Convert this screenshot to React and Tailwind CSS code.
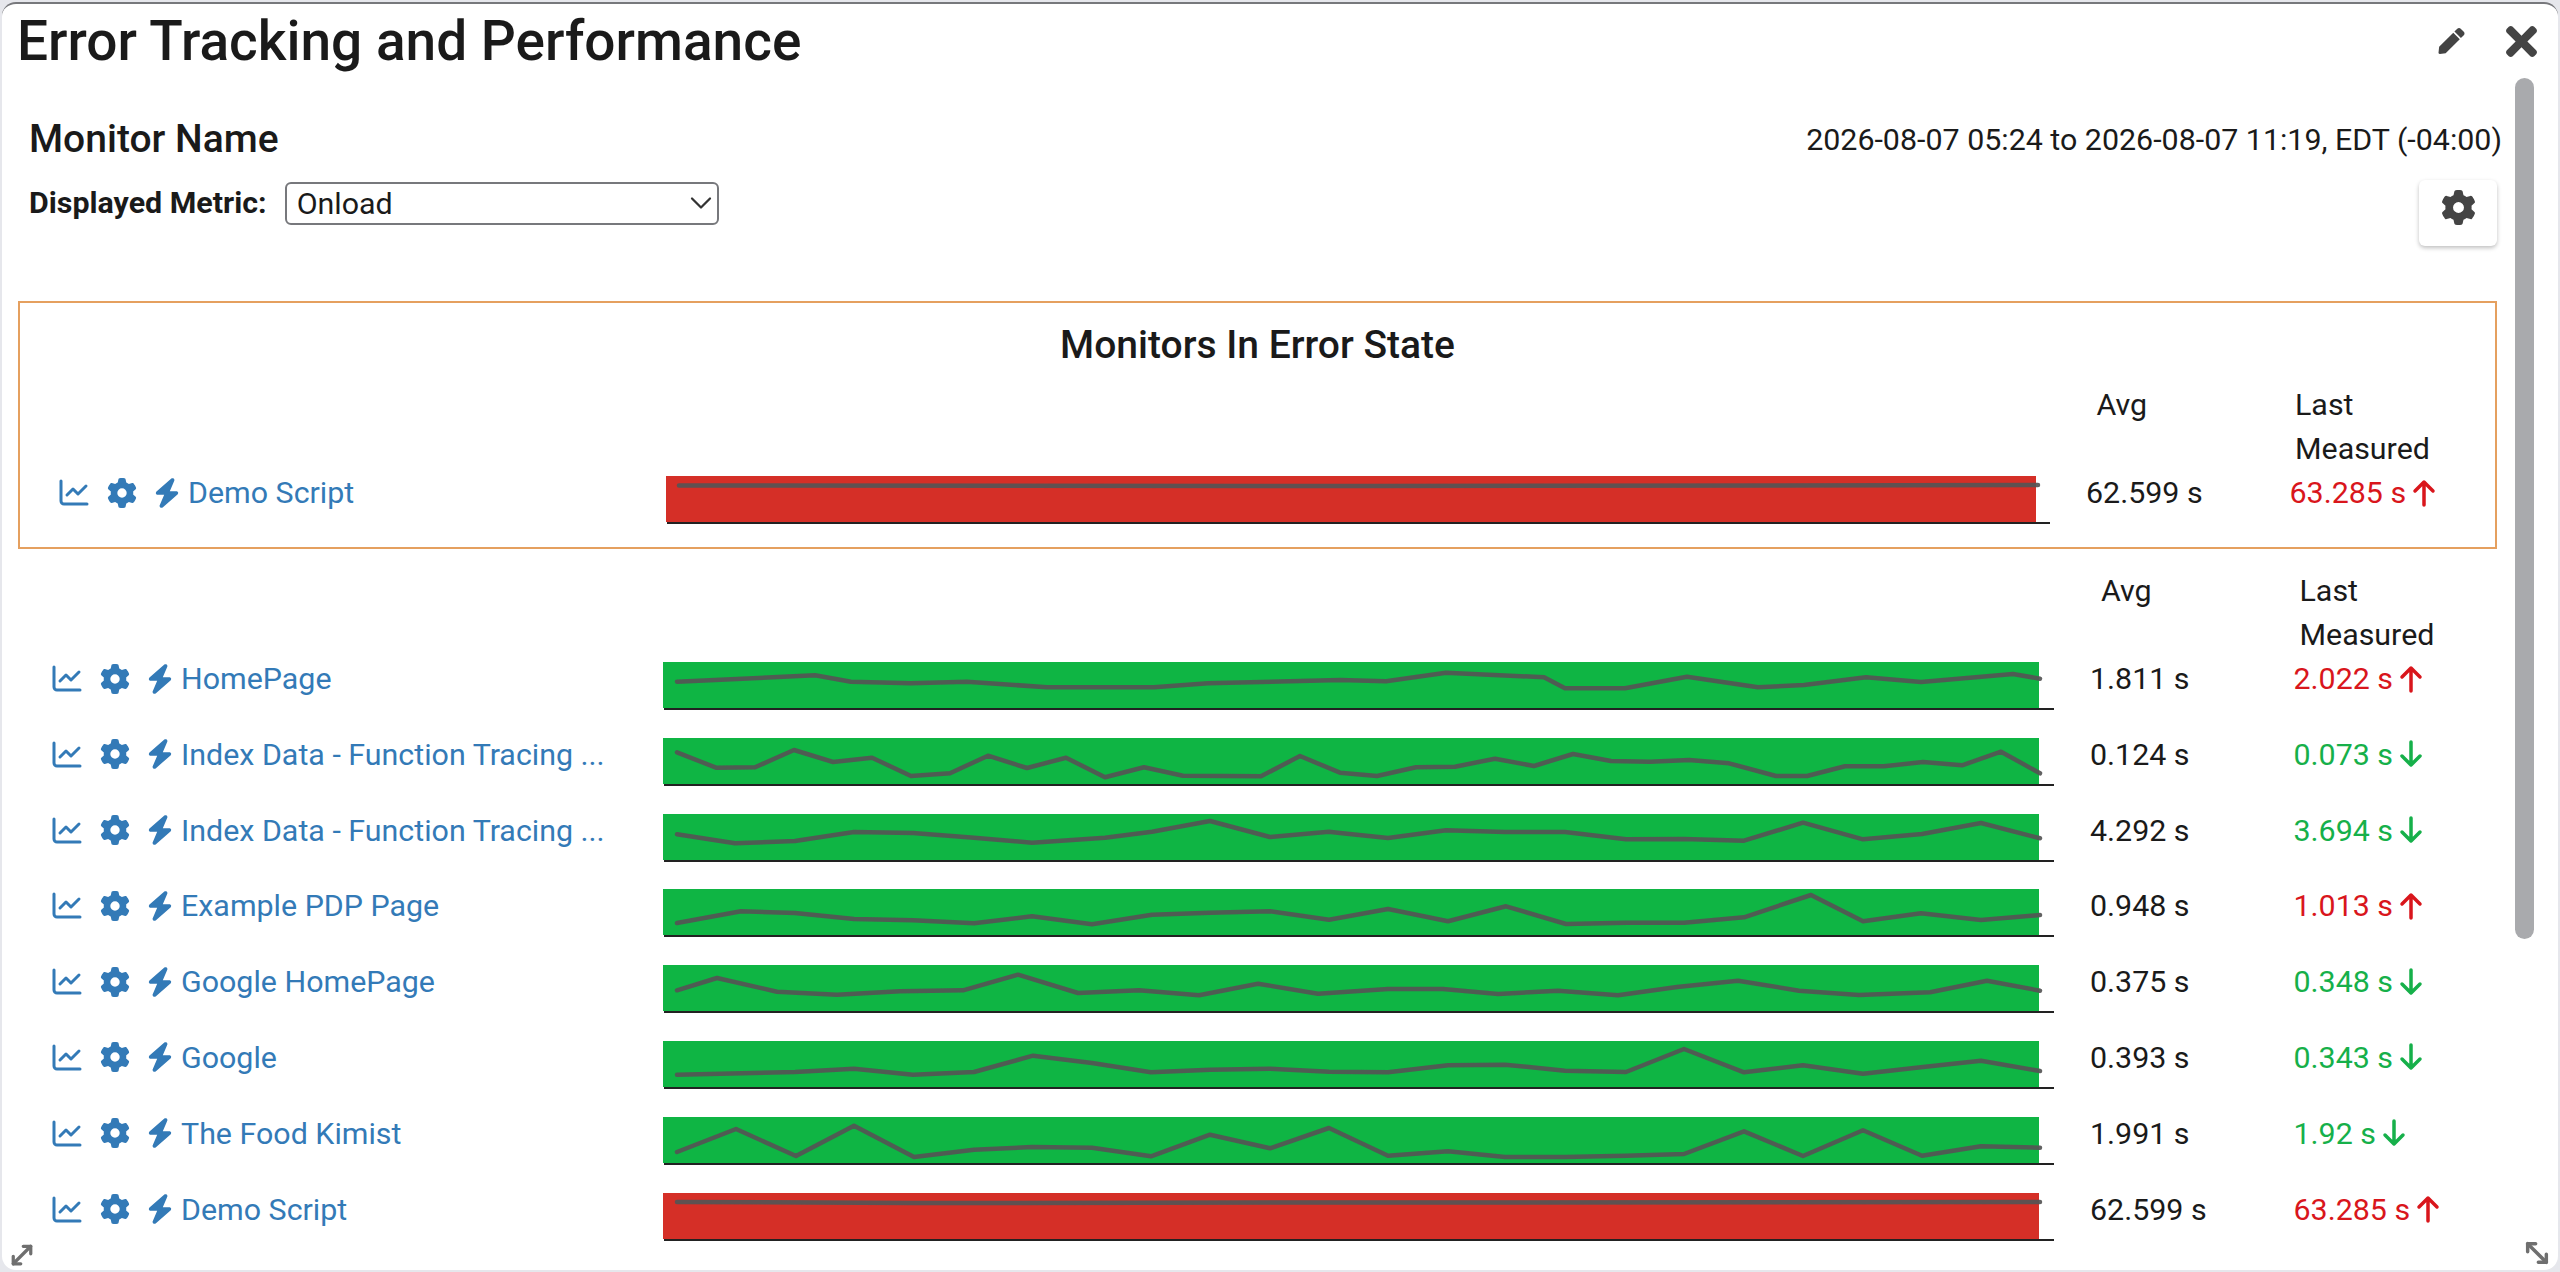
import { ChevronDown, MoveDiagonal, MoveDiagonal2 } from 'lucide-react';
import { FaPen, FaTimes } from 'react-icons/fa';
import { FaBolt, FaGear } from 'react-icons/fa6';

const GREEN = '#0fb544';
const RED = '#d52f27';

const monitors = [
  {
    name: 'HomePage', avg: '1.811 s', last: '2.022 s', up: true, color: GREEN,
    points: [[14,19.7],[152,13.3],[188,19.7],[248,21.3],[304,19.7],[384,25.3],[491,25.3],[545,21.3],[677,18],[723,19.3],[783,10.7],[881,15.3],[902,26.3],[962,26.3],[1024,14.7],[1095,25.3],[1141,23],[1203,15.3],[1258,20],[1350,12],[1377,16.7]],
  },
  {
    name: 'Index Data - Function Tracing ...', avg: '0.124 s', last: '0.073 s', up: false, color: GREEN,
    points: [[14,14.3],[53,29.7],[92,29.3],[131,12],[170,24],[209,19.7],[248,38],[287,35.3],[325,17.7],[364,30],[403,19.7],[442,39.3],[481,29.3],[520,37.7],[598,38.3],[637,18],[677,34.7],[714,38],[753,29.3],[792,28.7],[832,20.7],[871,28],[910,16],[948,23],[987,23.7],[1026,22],[1066,25.3],[1113,38],[1144,38],[1182,28.3],[1221,28.3],[1260,24],[1299,27.3],[1338,13.7],[1377,35.3]],
  },
  {
    name: 'Index Data - Function Tracing ...', avg: '4.292 s', last: '3.694 s', up: false, color: GREEN,
    points: [[14,20.3],[72,29.3],[132,27],[191,18],[250,19],[311,23.7],[369,28.7],[442,23.7],[489,17.7],[547,7],[607,23],[666,17.7],[677,19],[725,24],[783,16.3],[842,18],[902,18],[963,25.3],[1021,25],[1081,26.7],[1140,8.7],[1200,25.3],[1259,20],[1318,9],[1377,24.3]],
  },
  {
    name: 'Example PDP Page', avg: '0.948 s', last: '1.013 s', up: true, color: GREEN,
    points: [[14,34],[78,22.3],[132,24],[191,30],[250,31.3],[311,34.3],[369,27.3],[429,35.3],[489,25.7],[547,23.7],[607,22.3],[666,30.7],[725,20],[785,32.3],[843,17.3],[903,35],[963,33.7],[1021,33.7],[1081,28.3],[1148,6],[1200,32.3],[1258,24.3],[1318,31],[1377,26]],
  },
  {
    name: 'Google HomePage', avg: '0.375 s', last: '0.348 s', up: false, color: GREEN,
    points: [[14,25.3],[54,13],[114,26.7],[174,29.7],[237,26.3],[300,25.3],[355,9.7],[415,28],[476,25.3],[536,30.3],[595,18.7],[655,28.7],[725,24],[780,24],[835,29],[895,25.7],[955,30.3],[1014,22],[1075,15.7],[1136,25.7],[1196,30],[1267,27.3],[1324,15.7],[1377,25.7]],
  },
  {
    name: 'Google', avg: '0.393 s', last: '0.343 s', up: false, color: GREEN,
    points: [[14,33.7],[132,31],[191,27.7],[250,33.7],[311,31],[370,14.7],[429,22],[488,31.3],[547,28.7],[607,27.7],[666,30.7],[725,31.3],[785,24.3],[842,23.7],[902,29.7],[963,31],[1021,8],[1081,31.3],[1140,24.3],[1200,32.7],[1260,26],[1318,19.7],[1377,30]],
  },
  {
    name: 'The Food Kimist', avg: '1.991 s', last: '1.92 s', up: false, color: GREEN,
    points: [[14,35],[73,12],[133,39],[191,8.7],[251,40],[311,32.7],[369,30],[429,30.7],[488,39.3],[547,17.7],[607,31.3],[666,11],[725,38.7],[785,34.3],[842,40],[902,40],[963,38.7],[1021,37],[1081,14.3],[1140,39],[1200,13.3],[1259,38.7],[1318,29.3],[1377,30.7]],
  },
  {
    name: 'Demo Script', avg: '62.599 s', last: '63.285 s', up: true, color: RED,
    points: [[14,9],[250,10],[700,9.5],[1377,9]],
  },
];

const errorMonitor = {
  name: 'Demo Script', avg: '62.599 s', last: '63.285 s', up: true, color: RED,
  points: [[13,9.5],[700,10],[1372,9]],
};

function ChartLineIcon() {
  return (
    <svg width="30" height="27" viewBox="0 0 30 27" fill="none" stroke="currentColor" strokeWidth="3" strokeLinecap="round" strokeLinejoin="round">
      <path d="M2 2v20a3 3 0 0 0 3 3h23" />
      <path d="M8 16l6-6 5 5 8-8" />
    </svg>
  );
}

function Arrow({ up }) {
  return (
    <svg width="24" height="28" viewBox="0 0 24 28" fill="none" stroke="currentColor" strokeWidth="3.5" strokeLinecap="round" strokeLinejoin="round">
      <path d={up ? 'M12 26V3M3 12l9-9 9 9' : 'M12 2v23M3 16l9 9 9-9'} />
    </svg>
  );
}

function Sparkline({ monitor, barWidth, axisWidth }) {
  const line = monitor.points.map((p) => p.join(',')).join(' ');
  return (
    <svg width={axisWidth} height="48" className="mt-[5px] block shrink-0">
      <rect x="0" y="0" width={barWidth} height="46" fill={monitor.color} />
      <line x1="1" y1="47" x2={axisWidth} y2="47" stroke="#222" strokeWidth="2" />
      <polyline points={line} fill="none" stroke="#555" strokeOpacity="0.92" strokeWidth="4.5" strokeLinejoin="round" strokeLinecap="round" />
    </svg>
  );
}

function ColumnHeaders({ spacerClass }) {
  return (
    <div className="flex items-start leading-[44px]">
      <div className={spacerClass} />
      <div className="w-[202.5px] shrink-0 pl-[10px]">Avg</div>
      <div className="pl-[6px]">
        <div>Last</div>
        <div>Measured</div>
      </div>
    </div>
  );
}

function MonitorRow({ monitor, nameClass, rowClass, barWidth, axisWidth }) {
  return (
    <div className={`flex items-start leading-[43px] ${rowClass}`}>
      <div className={`flex h-[43px] shrink-0 items-center text-[#337ab7] ${nameClass}`}>
        <ChartLineIcon />
        <FaGear className="ml-[18px] h-[30px] w-[30px]" />
        <FaBolt className="ml-[17px] h-[30px] w-[26px]" />
        <span className="ml-[8px] whitespace-nowrap">{monitor.name}</span>
      </div>
      <Sparkline monitor={monitor} barWidth={barWidth} axisWidth={axisWidth} />
      <div className="ml-[36px] w-[203.5px] shrink-0">{monitor.avg}</div>
      <div className={`flex h-[43px] items-center gap-[6px] ${monitor.up ? 'text-[#d9161c]' : 'text-[#16b04a]'}`}>
        <span>{monitor.last}</span>
        <Arrow up={monitor.up} />
      </div>
    </div>
  );
}

export default function App() {
  return (
    <div className="h-[1272px] w-full overflow-hidden bg-[#e6e7ec] p-[2px] text-[30.4px] text-[#1a1a1a] [font-family:Roboto,sans-serif]">
      <div className="relative h-full overflow-hidden rounded-[14px] border-t-2 border-[#77787c] bg-white">
        <header className="flex h-[72px] items-center justify-between pl-[15px] pr-[21px] pt-[2px]">
          <h1 className="text-[55px] font-medium leading-none">Error Tracking and Performance</h1>
          <div className="flex items-center gap-[41px] text-[#444]">
            <FaPen className="h-[26px] w-[27px]" />
            <FaTimes className="h-[45px] w-[31px]" />
          </div>
        </header>

        <div className="pl-[16px] pr-[61px]">
          <div className="mt-[42px] -mr-[5px] flex items-center justify-between pl-[11px] leading-[43px]">
            <h2 className="text-[39px] font-medium">Monitor Name</h2>
            <span>2026-08-07 05:24 to 2026-08-07 11:19, EDT (-04:00)</span>
          </div>

          <div className="mt-[19px] flex items-start justify-between pl-[11px]">
            <div className="flex items-center gap-[18px]">
              <label className="pb-[2px] font-bold">Displayed Metric:</label>
              <div className="flex h-[43px] w-[434px] items-center justify-between rounded-[6px] border-2 border-[#77787c] pb-[1px] pl-[10px]">
                <span>Onload</span>
                <ChevronDown className="-mr-[2px] h-[36px] w-[36px] text-[#333]" strokeWidth={1.5} />
              </div>
            </div>
            <button className="flex h-[66px] w-[78px] items-center justify-center rounded-[6px] bg-white pb-[12px] text-[#444] shadow-[0_2px_4px_rgba(0,0,0,0.25)]">
              <FaGear className="h-[35px] w-[35px]" />
            </button>
          </div>

          <section className="mt-[55px] border-2 border-[#e5a05f] pt-[21px]">
            <h3 className="text-center text-[39px] font-medium leading-[43px]">Monitors In Error State</h3>
            <div className="mt-[16px] pl-[39px]">
              <ColumnHeaders spacerClass="w-[2027.5px] shrink-0" />
              <MonitorRow monitor={errorMonitor} nameClass="w-[607px]" rowClass="h-[76px]" barWidth={1370} axisWidth={1384} />
            </div>
          </section>

          <div className="mt-[20px] pl-[34px]">
            <ColumnHeaders spacerClass="w-[2039px] shrink-0" />
            {monitors.map((monitor) => (
              <MonitorRow
                key={monitor.avg}
                monitor={monitor}
                nameClass="w-[611px]"
                rowClass="h-[75.8px]"
                barWidth={1376}
                axisWidth={1391}
              />
            ))}
          </div>
        </div>

        {/* scrollbar and resize handles sit over the content */}
        <div className="absolute right-[24px] top-[74px] h-[861px] w-[19px] rounded-full bg-[#a9aaad]" />
        <MoveDiagonal className="absolute bottom-0 left-[5px] h-[30px] w-[30px] text-[#6f6f6f]" strokeWidth={2.6} />
        <MoveDiagonal2 className="absolute bottom-[1px] right-[5px] h-[32px] w-[32px] text-[#6f6f6f]" strokeWidth={2.6} />
      </div>
    </div>
  );
}
